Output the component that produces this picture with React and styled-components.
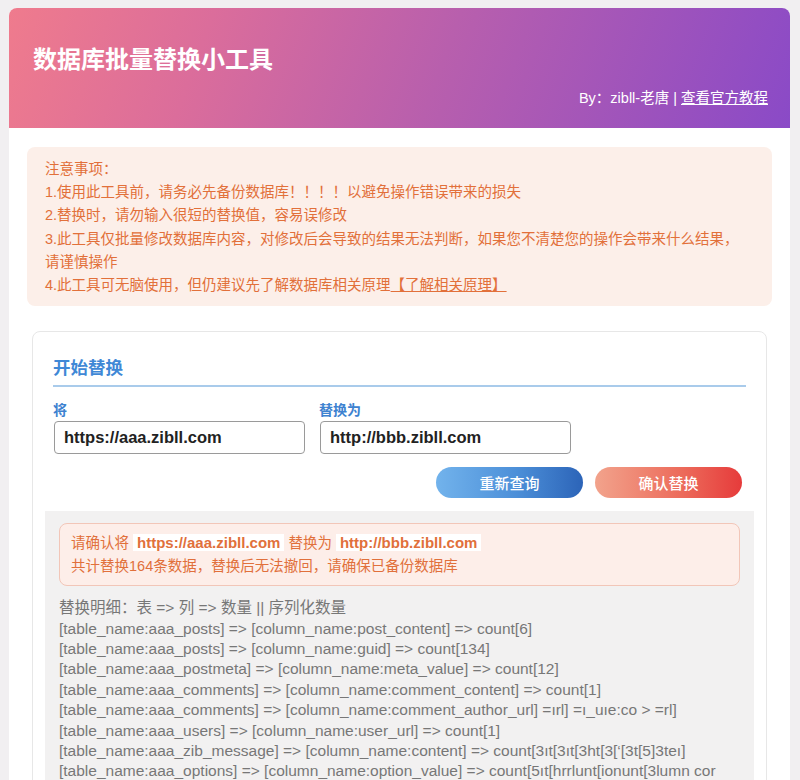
import React from 'react';
import styled, { createGlobalStyle } from 'styled-components';

const GlobalStyle = createGlobalStyle`
  body {
    margin: 0;
    background: #f1eff1;
    font-family: "Liberation Sans", "Noto Sans CJK SC", sans-serif;
  }
`;

const Wrapper = styled.div`
  margin: 8px 10px 0 9px;
  background: #fff;
  border-radius: 8px 8px 0 0;
  min-height: 900px;
`;

const Header = styled.header`
  height: 120px;
  box-sizing: border-box;
  padding: 33px 22px 0 24px;
  border-radius: 8px 8px 0 0;
  background: linear-gradient(110deg, #ef7b8d 0%, #db6d9b 25%, #b85fad 55%, #8a4ac7 100%);
  color: #fff;
  display: flex;
  flex-direction: column;
`;

const Title = styled.h1`
  margin: 0;
  font-size: 24px;
  line-height: 34px;
  font-weight: 700;
  font-family: "Noto Sans CJK SC", sans-serif;
`;

const ByLine = styled.div`
  margin-top: 13px;
  align-self: flex-end;
  font-size: 14.5px;
  line-height: 20px;
  a {
    color: #fff;
    text-decoration: underline;
  }
`;

const Body = styled.div`
  padding: 19px 18px;
`;

const Notice = styled.div`
  background: #fcefe9;
  border-radius: 8px;
  padding: 11px 18px 9px;
  color: #e2703a;
  font-size: 14.5px;
  line-height: 23.2px;
  a {
    color: #e2703a;
    text-decoration: underline;
  }
`;

const NoWrap = styled.span`
  white-space: nowrap;
`;

const Card = styled.section`
  margin: 25px 5px 0;
  border: 1px solid #e7e7e7;
  border-radius: 8px;
  padding: 12px;
`;

const FormSection = styled.div`
  padding: 0 8px;
`;

const CardTitle = styled.h2`
  margin: 12px 0 0;
  padding-bottom: 5px;
  border-bottom: 2px solid #a9cbeb;
  color: #3f88d6;
  font-size: 17.5px;
  line-height: 24px;
  font-weight: 700;
`;

const Fields = styled.div`
  display: flex;
  gap: 14px;
  margin-top: 13px;
`;

const Field = styled.div`
  display: flex;
  flex-direction: column;
`;

const Label = styled.label`
  color: #3d82d0;
  font-size: 14px;
  line-height: 20px;
  font-weight: 700;
  margin-bottom: 1px;
`;

const Input = styled.input`
  width: 251px;
  height: 33px;
  box-sizing: border-box;
  margin-left: 1px;
  border: 1px solid #9a9a9a;
  border-radius: 4px;
  padding: 0 9px;
  font-family: "Liberation Sans", sans-serif;
  font-size: 16.5px;
  font-weight: 700;
  color: #222;
  background: #fff;
`;

const Actions = styled.div`
  display: flex;
  justify-content: flex-end;
  gap: 12px;
  margin: 13px 4px 0 0;
`;

const Button = styled.button`
  width: 147px;
  height: 31px;
  border: none;
  border-radius: 16px;
  color: #fff;
  font-family: "Noto Sans CJK SC", sans-serif;
  font-size: 15px;
  font-weight: 500;
  background: ${({ $tone }) =>
    $tone === 'red'
      ? 'linear-gradient(90deg, #f2a38c 0%, #ec6a5a 60%, #e63b3b 100%)'
      : 'linear-gradient(90deg, #72b3ec 0%, #4c8fd8 55%, #2c64b8 100%)'};
`;

const Result = styled.div`
  margin-top: 13px;
  background: #f2f1f1;
  padding: 12px 14px;
`;

const Alert = styled.div`
  background: #fdeee9;
  border: 1px solid #f2c6b8;
  border-radius: 8px;
  padding: 7px 11px;
  color: #e1703b;
  font-size: 14.5px;
  line-height: 23px;
`;

const Url = styled.b`
  background: #fff;
  padding: 0 4px;
  font-family: "Liberation Sans", sans-serif;
  font-size: 15px;
  font-weight: 700;
`;

const Details = styled.div`
  margin-top: 12px;
  color: #777;
  font-size: 15.5px;
  line-height: 20.4px;
`;

const details = [
  '替换明细：表 => 列 => 数量 || 序列化数量',
  '[table_name:aaa_posts] => [column_name:post_content] => count[6]',
  '[table_name:aaa_posts] => [column_name:guid] => count[134]',
  '[table_name:aaa_postmeta] => [column_name:meta_value] => count[12]',
  '[table_name:aaa_comments] => [column_name:comment_content] => count[1]',
  '[table_name:aaa_comments] => [column_name:comment_author_url] =ırl] =ı_uıe:co >   =rl]',
  '[table_name:aaa_users] => [column_name:user_url] => count[1]',
  '[table_name:aaa_zib_message] => [column_name:content] => count[3ıt[3ıt[3ht[3[‘[3t[5]3teı]',
  '[table_name:aaa_options] => [column_name:option_value] => count[5ıt[hrrlunt[ionunt[3lumn cor',
  '[table_name:aaa_usermeta] => [column_name:meta_value] => count[2]',
];

export default function App() {
  return (
    <>
      <GlobalStyle />
      <Wrapper>
        <Header>
          <Title>数据库批量替换小工具</Title>
          <ByLine>
            By：zibll-老唐 | <a href="#">查看官方教程</a>
          </ByLine>
        </Header>
        <Body>
          <Notice>
            <div>注意事项：</div>
            <div>1.使用此工具前，请务必先备份数据库！！！！以避免操作错误带来的损失</div>
            <div>2.替换时，请勿输入很短的替换值，容易误修改</div>
            <div>
              3.此工具仅批量修改数据库内容，对修改后会导致的结果无法判断，如果您不清楚您的操作会带来什么结果，
              <NoWrap>请谨慎操作</NoWrap>
            </div>
            <div>
              4.此工具可无脑使用，但仍建议先了解数据库相关原理<a href="#">【了解相关原理】</a>
            </div>
          </Notice>
          <Card>
            <FormSection>
              <CardTitle>开始替换</CardTitle>
              <Fields>
                <Field>
                  <Label>将</Label>
                  <Input defaultValue="https://aaa.zibll.com" />
                </Field>
                <Field>
                  <Label>替换为</Label>
                  <Input defaultValue="http://bbb.zibll.com" />
                </Field>
              </Fields>
              <Actions>
                <Button>重新查询</Button>
                <Button $tone="red">确认替换</Button>
              </Actions>
            </FormSection>
            <Result>
              <Alert>
                <div>
                  请确认将 <Url>https://aaa.zibll.com</Url> 替换为 <Url>http://bbb.zibll.com</Url>
                </div>
                <div>共计替换164条数据，替换后无法撤回，请确保已备份数据库</div>
              </Alert>
              <Details>
                {details.map((line, i) => (
                  <div key={i}>{line}</div>
                ))}
              </Details>
            </Result>
          </Card>
        </Body>
      </Wrapper>
    </>
  );
}
